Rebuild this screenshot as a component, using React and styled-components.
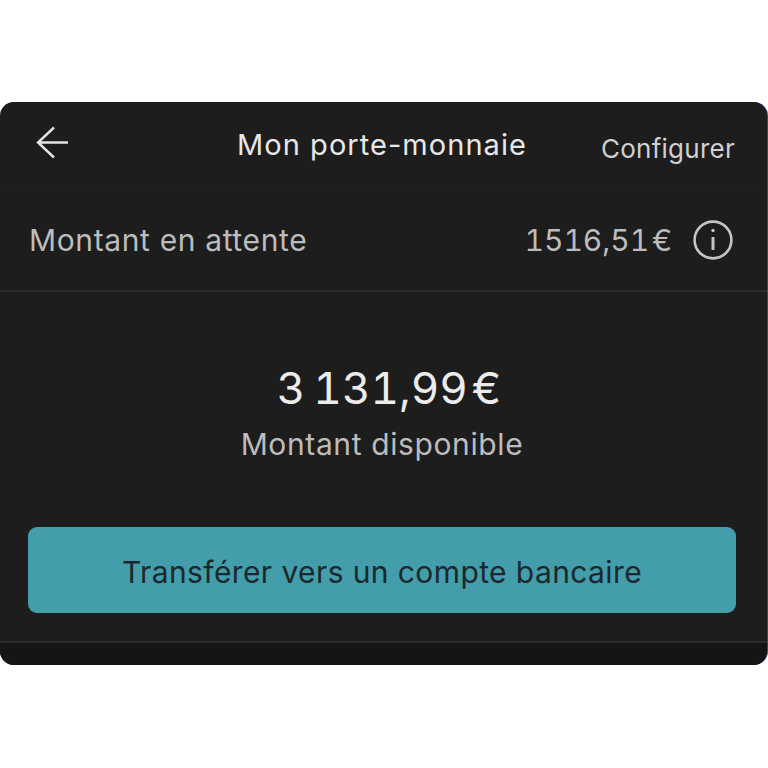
import React from 'react'
import styled, { createGlobalStyle } from 'styled-components'

const GlobalStyle = createGlobalStyle`
    html, body {
        margin: 0;
        background: #fff;
    }
    * {
        box-sizing: border-box;
    }
`;

const Page = styled.div`
    width: 768px;
    height: 768px;
    padding: 102px 1px 0 0;
    font-family: Inter, "Liberation Sans", sans-serif;
`;

const Card = styled.div`
    height: 563px;
    background: #1d1d1d;
    border-radius: 14px;
    overflow: hidden;
    display: flex;
    flex-direction: column;
    box-shadow: 1px 0 0 #4b3a78;
`;

const Header = styled.header`
    height: 85px;
    padding: 0 32px 0 36px;
    display: grid;
    grid-template-columns: 1fr auto 1fr;
    align-items: center;
    border-bottom: 1px solid #202020;
`;

const BackButton = styled.div`
    display: flex;
    height: 34px;
    align-self: start;
    margin-top: 24px;
`;

const Title = styled.h1`
    margin: 2px 7px 0 0;
    font-size: 29px;
    font-weight: 400;
    letter-spacing: 1.05px;
    line-height: 34px;
    color: #e8e8e8;
`;

const Action = styled.span`
    justify-self: end;
    padding-top: 9px;
    font-size: 26px;
    line-height: 30px;
    letter-spacing: 0.25px;
    color: #d0d0d0;
`;

const PendingRow = styled.div`
    height: 105px;
    padding: 3px 34px 0 29px;
    display: flex;
    align-items: center;
    justify-content: space-between;
    border-bottom: 2px solid #2c2c2c;
    color: #bcbcbc;
    font-size: 30px;
`;

const PendingLabel = styled.span`
    letter-spacing: 0.63px;
`;

const PendingAmount = styled.div`
    display: flex;
    align-items: center;
    gap: 21px;
`;

const PendingValue = styled.span`
    font-variant-numeric: tabular-nums;
`;

const Balance = styled.section`
    height: 235px;
    padding: 69px 3px 0 0;
    display: flex;
    flex-direction: column;
    align-items: center;
`;

const Amount = styled.div`
    margin-left: 14px;
    font-size: 44px;
    font-weight: 400;
    line-height: 54px;
    color: #ececec;
    font-variant-numeric: tabular-nums;
`;

const AmountLabel = styled.div`
    margin-top: 11px;
    font-size: 30px;
    line-height: 36px;
    letter-spacing: 0.62px;
    color: #bcbcbc;
`;

const Actions = styled.div`
    height: 116px;
    padding: 0 31px 0 28px;
    border-bottom: 2px solid #2a2a2a;
`;

const TransferButton = styled.button`
    width: 100%;
    height: 86px;
    padding: 3px 0 0;
    border: none;
    border-radius: 9px;
    background: #449daa;
    font-family: inherit;
    font-size: 30px;
    font-weight: 400;
    letter-spacing: 0.4px;
    color: #1b282d;
`;

const Footer = styled.div`
    flex: 1;
    background: #151515;
`;

const ArrowLeft = () => (
    <svg width="34" height="34" viewBox="0 0 34 34" fill="none" stroke="#e4e4e4" strokeWidth="2.4">
        <path d="M32 16.5H2M18 1.5L2 16.5L18 31.5" />
    </svg>
)

const InfoIcon = () => (
    <svg width="40" height="40" viewBox="0 0 40 40" fill="none" stroke="#c4c4c4" strokeWidth="2.6">
        <circle cx="20" cy="20" r="18.4" />
        <path d="M20 17V30" strokeWidth="3" />
        <circle cx="20" cy="10.5" r="1.7" fill="#c4c4c4" stroke="none" />
    </svg>
)

export default function App() {
    return (
        <Page>
            <GlobalStyle />
            <Card>
                <Header>
                    <BackButton>
                        <ArrowLeft />
                    </BackButton>
                    <Title>Mon porte-monnaie</Title>
                    <Action>Configurer</Action>
                </Header>
                <PendingRow>
                    <PendingLabel>Montant en attente</PendingLabel>
                    <PendingAmount>
                        <PendingValue>1516,51{'\u200a'}€</PendingValue>
                        <InfoIcon />
                    </PendingAmount>
                </PendingRow>
                <Balance>
                    <Amount>3{'\u202f'}131,99{'\u200a'}€</Amount>
                    <AmountLabel>Montant disponible</AmountLabel>
                </Balance>
                <Actions>
                    <TransferButton>Transférer vers un compte bancaire</TransferButton>
                </Actions>
                <Footer />
            </Card>
        </Page>
    )
}
